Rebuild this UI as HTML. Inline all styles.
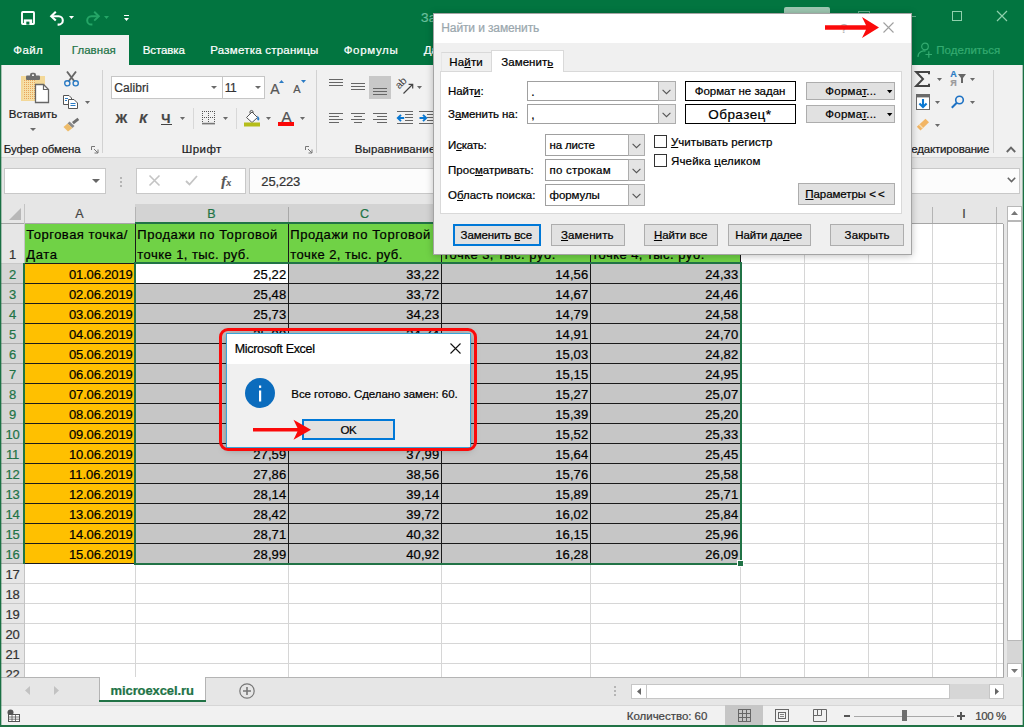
<!DOCTYPE html><html><head><meta charset="utf-8"><title>Excel</title><style>
*{box-sizing:border-box;margin:0;padding:0}
html,body{width:1024px;height:727px;overflow:hidden}
body{position:relative;font-family:"Liberation Sans",sans-serif;background:#e6e6e6;font-size:12px}
.t{position:absolute;white-space:nowrap;line-height:1;-webkit-text-stroke:0.22px}
.r{position:absolute}
svg{position:absolute;overflow:visible}
u{text-decoration:underline;text-underline-offset:1px}
</style></head><body>
<div class="r" style="left:0px;top:0px;width:1024px;height:65px;background:#027540;"></div>
<svg style="left:21px;top:11px;" width="14" height="14" viewBox="0 0 14 14"><rect x="1" y="1" width="12" height="12" rx="0.8" fill="none" stroke="#fff" stroke-width="1.9"/><rect x="2.8" y="8.4" width="8.4" height="4.8" fill="#fff"/><rect x="5.3" y="10.6" width="3.1" height="3" fill="#027540"/></svg>
<svg style="left:50px;top:10.5px;" width="15" height="14" viewBox="0 0 15 14"><path d="M2 5.2H8.6a4.2 4.2 0 0 1 0 8.4H7.6" fill="none" stroke="#fff" stroke-width="2.1"/><path d="M5.8 0.8L1.2 5.2L5.8 9.6" fill="none" stroke="#fff" stroke-width="2.1"/></svg>
<svg style="left:68.8px;top:16px;" width="5" height="3" viewBox="0 0 5 3"><path d="M0 0H5L2.5 3Z" fill="#fff"/></svg>
<svg style="left:84.5px;top:10.5px;" width="15" height="14" viewBox="0 0 15 14"><path d="M13 5.2H6.4a4.2 4.2 0 0 0 0 8.4H7.4" fill="none" stroke="#25a566" stroke-width="2"/><path d="M9.2 0.8L13.8 5.2L9.2 9.6" fill="none" stroke="#25a566" stroke-width="2"/></svg>
<svg style="left:103.8px;top:16px;" width="5" height="3" viewBox="0 0 5 3"><path d="M0 0H5L2.5 3Z" fill="#25a566"/></svg>
<div class="r" style="left:124px;top:15px;width:5px;height:1px;background:#fff;"></div>
<svg style="left:124.0px;top:18px;" width="5" height="3" viewBox="0 0 5 3"><path d="M0 0H5L2.5 3Z" fill="#fff"/></svg>
<div class="t" style="left:421.1px;top:12.4px;font-size:12.5px;color:#6cc09e;">За</div>
<div class="r" style="left:60px;top:35px;width:69px;height:30px;background:#f1f1f1;"></div>
<div class="t" style="left:13.3px;top:45.0px;font-size:11.5px;color:#fff;letter-spacing:0.41px;">Файл</div>
<div class="t" style="left:71.8px;top:45.0px;font-size:11.5px;color:#217346;letter-spacing:0.04px;">Главная</div>
<div class="t" style="left:142.8px;top:45.0px;font-size:11.5px;color:#fff;letter-spacing:-0.12px;">Вставка</div>
<div class="t" style="left:210.3px;top:45.0px;font-size:11.5px;color:#fff;letter-spacing:0.23px;">Разметка страницы</div>
<div class="t" style="left:343.7px;top:45.0px;font-size:11.5px;color:#fff;letter-spacing:0.66px;">Формулы</div>
<div class="t" style="left:423.8px;top:45.0px;font-size:11.5px;color:#fff;">Данные</div>
<div class="r" style="left:784px;top:7px;width:46px;height:12px;background:#9ec8b2;border-radius:2px"></div>
<div class="r" style="left:858px;top:11px;width:12px;height:10px;background:transparent;border:1px solid #5fae8a"></div>
<div class="r" style="left:906px;top:16px;width:10px;height:1px;background:#5fae8a;"></div>
<div class="r" style="left:952px;top:11px;width:10px;height:10px;background:transparent;border:1px solid #8fd0ac"></div>
<svg style="left:997px;top:11px;" width="10" height="10" viewBox="0 0 10 10"><path d="M0 0L10 10M10 0L0 10" stroke="#8fd0ac" stroke-width="1.2"/></svg>
<svg style="left:917px;top:42px;" width="16" height="16" viewBox="0 0 16 16"><circle cx="8" cy="4.5" r="3.3" fill="none" stroke="#34ab70" stroke-width="1.2"/><path d="M1 15C1 9.5 6 8.5 8.5 9.2" fill="none" stroke="#34ab70" stroke-width="1.2"/><path d="M8.5 12.5H15M11.8 9.2V15.8" stroke="#34ab70" stroke-width="1.2"/></svg>
<div class="t" style="left:936.3px;top:45.0px;font-size:11.5px;color:#34ab70;letter-spacing:0.05px;">Поделиться</div>
<div class="r" style="left:0px;top:65px;width:1024px;height:92px;background:#f1f1f1;"></div>
<div class="r" style="left:0px;top:157px;width:1024px;height:1px;background:#d8d8d8;"></div>
<svg style="left:20px;top:72px;" width="30" height="32" viewBox="0 0 30 32"><defs><pattern id="pd" width="2" height="2" patternUnits="userSpaceOnUse"><rect width="2" height="2" fill="#f6e0a8"/><rect width="1" height="1" fill="#e9a55c"/></pattern></defs><rect x="1" y="4" width="24" height="25" fill="#f3d898"/><rect x="3" y="8" width="12" height="20" fill="url(#pd)"/><rect x="6" y="3.5" width="14" height="4.5" rx="1" fill="#6e6e6e"/><rect x="10" y="0.8" width="6" height="5" rx="2" fill="#6e6e6e"/><rect x="12" y="2.4" width="2" height="1.6" fill="#f1f1f1"/><path d="M15.5 12.5H23.5L28.5 17.5V30.5H15.5Z" fill="#fff" stroke="#666" stroke-width="1.3"/><path d="M23.5 12.5V17.5H28.5" fill="none" stroke="#666" stroke-width="1.2"/></svg>
<div class="t" style="left:8.8px;top:109.0px;font-size:11.5px;color:#1c1c1c;letter-spacing:-0.04px;">Вставить</div>
<svg style="left:30.0px;top:128px;" width="6" height="3" viewBox="0 0 6 3"><path d="M0 0H6L3.0 3Z" fill="#6a6a6a"/></svg>
<svg style="left:64px;top:71px;" width="15" height="16" viewBox="0 0 15 16"><path d="M3 0.5L10.5 10.5M12 0.5L4.5 10.5" stroke="#666" stroke-width="1.9" fill="none"/><circle cx="3.3" cy="12.3" r="2.6" fill="none" stroke="#2b7bc4" stroke-width="1.4"/><circle cx="11.7" cy="12.3" r="2.6" fill="none" stroke="#2b7bc4" stroke-width="1.4"/></svg>
<svg style="left:63px;top:95px;" width="15" height="14" viewBox="0 0 15 14"><path d="M0.5 0.5H6L8.5 3V9.5H0.5Z" fill="#fff" stroke="#555"/><path d="M5.5 4.5H11L14.5 8V13.5H5.5Z" fill="#fff" stroke="#555"/><path d="M2 3.5H5M2 5.5H4M7.5 8.5H12.5M7.5 10.5H12.5" stroke="#2b7bc4" stroke-width="1"/></svg>
<svg style="left:85.0px;top:101px;" width="5" height="3" viewBox="0 0 5 3"><path d="M0 0H5L2.5 3Z" fill="#6a6a6a"/></svg>
<svg style="left:63px;top:117px;" width="17" height="15" viewBox="0 0 17 15"><path d="M9 5L14.5 0.8L16.2 3L10.8 7.2Z" fill="#6e6e6e"/><path d="M6.5 4.5L11.5 9L9.5 11L4.5 6.5Z" fill="#8a8a8a"/><path d="M4.5 6.5L9.5 11L5 14.5L0.5 10Z" fill="#eebc6a"/></svg>
<div class="t" style="left:3.8px;top:144.0px;font-size:11.5px;color:#1c1c1c;letter-spacing:-0.11px;">Буфер обмена</div>
<svg style="left:91px;top:146px;" width="8" height="8" viewBox="0 0 8 8"><path d="M0.5 4V0.5H4" fill="none" stroke="#777"/><path d="M3 3L7 7M7 3.5V7H3.5" fill="none" stroke="#777"/></svg>
<div class="r" style="left:102px;top:70px;width:1px;height:83px;background:#d2d2d2;"></div>
<div class="r" style="left:111px;top:76px;width:112px;height:23px;background:#fff;border:1px solid #c6c6c6"></div>
<div class="r" style="left:222px;top:76px;width:43px;height:23px;background:#fff;border:1px solid #c6c6c6"></div>
<div class="t" style="left:114.3px;top:82.2px;font-size:12px;color:#333;letter-spacing:0.08px;">Calibri</div>
<svg style="left:211.0px;top:86px;" width="6" height="3" viewBox="0 0 6 3"><path d="M0 0H6L3.0 3Z" fill="#6a6a6a"/></svg>
<div class="t" style="left:224.8px;top:82.2px;font-size:12px;color:#333;letter-spacing:-0.47px;">11</div>
<svg style="left:254.5px;top:86px;" width="6" height="3" viewBox="0 0 6 3"><path d="M0 0H6L3.0 3Z" fill="#6a6a6a"/></svg>
<div class="t" style="left:270.3px;top:81.6px;font-size:14px;color:#555;">A</div>
<svg style="left:279px;top:80px;" width="5" height="3" viewBox="0 0 5 3"><path d="M0 3H5L2.5 0Z" fill="#2b7bc4"/></svg>
<div class="t" style="left:293.3px;top:84.2px;font-size:11px;color:#555;">A</div>
<svg style="left:301px;top:80px;" width="5" height="3" viewBox="0 0 5 3"><path d="M0 0H5L2.5 3Z" fill="#2b7bc4"/></svg>
<div class="t" style="left:115.6px;top:112.1px;font-size:13px;color:#444;font-weight:bold">Ж</div>
<div class="t" style="left:139.3px;top:112.1px;font-size:13px;color:#444;font-weight:bold;font-style:italic">К</div>
<div class="t" style="left:161.3px;top:112.1px;font-size:13px;color:#444;font-weight:bold">Ч</div>
<div class="r" style="left:161px;top:124px;width:11px;height:1px;background:#444;"></div>
<svg style="left:180.0px;top:117px;" width="5" height="3" viewBox="0 0 5 3"><path d="M0 0H5L2.5 3Z" fill="#6a6a6a"/></svg>
<div class="r" style="left:193px;top:108px;width:1px;height:21px;background:#d8d8d8;"></div>
<svg style="left:202px;top:111px;" width="14" height="14" viewBox="0 0 14 14"><path d="M0 0.5H13M0 6.5H13M0.5 0V12M6.5 0V12M12.5 0V12" stroke="#555" stroke-dasharray="1 1" fill="none"/><path d="M0 12.6H13" stroke="#777" stroke-width="1.6"/></svg>
<svg style="left:223.0px;top:117px;" width="5" height="3" viewBox="0 0 5 3"><path d="M0 0H5L2.5 3Z" fill="#6a6a6a"/></svg>
<div class="r" style="left:236px;top:108px;width:1px;height:21px;background:#d8d8d8;"></div>
<svg style="left:244px;top:110px;" width="17" height="17" viewBox="0 0 17 17"><path d="M2.5 7.5L8 2L13.5 7.5L8 12.5Z" fill="#fff" stroke="#555"/><path d="M6 3.5V1.2Q7.5 -0.3 9 1.2V3" fill="none" stroke="#555"/><path d="M13.5 5.5Q16 8 15.2 10Q14 11 13.2 9.5Z" fill="#2b7bc4"/><rect x="0" y="12.5" width="16" height="4" fill="#b5bd1a"/></svg>
<svg style="left:266.0px;top:117px;" width="5" height="3" viewBox="0 0 5 3"><path d="M0 0H5L2.5 3Z" fill="#6a6a6a"/></svg>
<div class="t" style="left:281.6px;top:109.0px;font-size:15px;color:#505050;">A</div>
<div class="r" style="left:278px;top:122px;width:16px;height:4px;background:#fb0808;"></div>
<svg style="left:300.0px;top:117px;" width="5" height="3" viewBox="0 0 5 3"><path d="M0 0H5L2.5 3Z" fill="#6a6a6a"/></svg>
<div class="t" style="left:181.8px;top:144.0px;font-size:11.5px;color:#1c1c1c;letter-spacing:0.41px;">Шрифт</div>
<svg style="left:305px;top:146px;" width="8" height="8" viewBox="0 0 8 8"><path d="M0.5 4V0.5H4" fill="none" stroke="#777"/><path d="M3 3L7 7M7 3.5V7H3.5" fill="none" stroke="#777"/></svg>
<div class="r" style="left:316px;top:70px;width:1px;height:83px;background:#d2d2d2;"></div>
<svg style="left:329px;top:79px;" width="14" height="9" viewBox="0 0 14 9"><rect x="0" y="0" width="14" height="1" fill="#666"/><rect x="0" y="3" width="14" height="1" fill="#666"/><rect x="0" y="6" width="14" height="1" fill="#666"/></svg>
<svg style="left:351px;top:83px;" width="14" height="9" viewBox="0 0 14 9"><rect x="0" y="0" width="14" height="1" fill="#666"/><rect x="0" y="3" width="14" height="1" fill="#666"/><rect x="0" y="6" width="14" height="1" fill="#666"/></svg>
<div class="r" style="left:369px;top:76px;width:22px;height:23px;background:#c8c8c8;"></div>
<svg style="left:373px;top:88px;" width="14" height="9" viewBox="0 0 14 9"><rect x="0" y="0" width="14" height="1" fill="#666"/><rect x="0" y="3" width="14" height="1" fill="#666"/><rect x="0" y="6" width="14" height="1" fill="#666"/></svg>
<svg style="left:396px;top:77px;" width="18" height="18" viewBox="0 0 18 18"><text x="0" y="0" font-size="10.5" font-family="Liberation Sans" fill="#444" transform="translate(3.2 12.6) rotate(-45)">ab</text><path d="M7.5 16.5L16.5 7.5M12.6 7.3H16.7V11.4" fill="none" stroke="#444" stroke-width="1.2"/></svg>
<svg style="left:417.0px;top:86px;" width="5" height="3" viewBox="0 0 5 3"><path d="M0 0H5L2.5 3Z" fill="#6a6a6a"/></svg>
<svg style="left:329px;top:113px;" width="14" height="12" viewBox="0 0 14 12"><rect x="0" y="0" width="14" height="1" fill="#666"/><rect x="0" y="3" width="10" height="1" fill="#666"/><rect x="0" y="6" width="14" height="1" fill="#666"/><rect x="0" y="9" width="10" height="1" fill="#666"/></svg>
<svg style="left:351px;top:113px;" width="17" height="12" viewBox="0 0 17 12"><rect x="0" y="0" width="14" height="1" fill="#666"/><rect x="3" y="3" width="8" height="1" fill="#666"/><rect x="0" y="6" width="14" height="1" fill="#666"/><rect x="3" y="9" width="8" height="1" fill="#666"/></svg>
<svg style="left:373px;top:113px;" width="18" height="12" viewBox="0 0 18 12"><rect x="0" y="0" width="14" height="1" fill="#666"/><rect x="4" y="3" width="10" height="1" fill="#666"/><rect x="0" y="6" width="14" height="1" fill="#666"/><rect x="4" y="9" width="10" height="1" fill="#666"/></svg>
<svg style="left:397px;top:111px;" width="24" height="15" viewBox="0 0 24 15"><rect x="0" y="0" width="16" height="1" fill="#666"/><rect x="8" y="3" width="8" height="1" fill="#666"/><rect x="8" y="6" width="8" height="1" fill="#666"/><rect x="8" y="9" width="8" height="1" fill="#666"/><rect x="0" y="12" width="16" height="1" fill="#666"/></svg>
<svg style="left:397px;top:113.5px;" width="8" height="8" viewBox="0 0 8 8"><path d="M7.2 4H1M4 0.8L0.8 4L4 7.2" fill="none" stroke="#0a78d2" stroke-width="1.9"/></svg>
<svg style="left:419px;top:111px;" width="24" height="15" viewBox="0 0 24 15"><rect x="0" y="0" width="16" height="1" fill="#666"/><rect x="8" y="3" width="8" height="1" fill="#666"/><rect x="8" y="6" width="8" height="1" fill="#666"/><rect x="8" y="9" width="8" height="1" fill="#666"/><rect x="0" y="12" width="16" height="1" fill="#666"/></svg>
<svg style="left:419px;top:113.5px;" width="8" height="8" viewBox="0 0 8 8"><path d="M0.5 4H6.8M4 0.8L7.2 4L4 7.2" fill="none" stroke="#0a78d2" stroke-width="1.9"/></svg>
<div class="t" style="left:354.8px;top:144.0px;font-size:11.5px;color:#1c1c1c;letter-spacing:0.12px;">Выравнивание</div>
<svg style="left:915px;top:71px;" width="15" height="16" viewBox="0 0 15 16"><path d="M14 3.2V1H1.2L8 8L1.2 15H14V12.8" fill="none" stroke="#444" stroke-width="2" stroke-linejoin="miter"/></svg>
<svg style="left:937.0px;top:78px;" width="5" height="3" viewBox="0 0 5 3"><path d="M0 0H5L2.5 3Z" fill="#6a6a6a"/></svg>
<div class="t" style="left:950.3px;top:70.4px;font-size:9px;color:#2b7bc4;font-weight:bold">А</div>
<div class="t" style="left:950.3px;top:79.4px;font-size:9px;color:#9a9a9a;font-weight:bold">Я</div>
<svg style="left:958px;top:74px;" width="8" height="9" viewBox="0 0 8 9"><path d="M0 0H8L5 4V9H3V4Z" fill="#666"/></svg>
<svg style="left:970.0px;top:78px;" width="5" height="3" viewBox="0 0 5 3"><path d="M0 0H5L2.5 3Z" fill="#6a6a6a"/></svg>
<svg style="left:916px;top:94px;" width="14" height="16" viewBox="0 0 14 16"><rect x="0.5" y="0.5" width="13" height="15" fill="#fff" stroke="#6a6a6a"/><rect x="0" y="0" width="14" height="3.4" fill="#6a6a6a"/><path d="M7 5V13M3.4 9.4L7 13L10.6 9.4" fill="none" stroke="#0a78d2" stroke-width="2.1"/></svg>
<svg style="left:935.0px;top:101px;" width="5" height="3" viewBox="0 0 5 3"><path d="M0 0H5L2.5 3Z" fill="#6a6a6a"/></svg>
<svg style="left:951px;top:95px;" width="14" height="14" viewBox="0 0 14 14"><circle cx="8.5" cy="5" r="3.8" fill="none" stroke="#1e72c4" stroke-width="1.6"/><path d="M5.8 7.8L0.8 12.8" stroke="#1e72c4" stroke-width="2"/></svg>
<svg style="left:970.0px;top:101px;" width="5" height="3" viewBox="0 0 5 3"><path d="M0 0H5L2.5 3Z" fill="#6a6a6a"/></svg>
<svg style="left:916px;top:118px;" width="14" height="13" viewBox="0 0 14 13"><path d="M9.5 0.8L13 4.2L4.5 12.4L0.8 8.8Z" fill="#f2b564"/><path d="M3.2 6.6L6.8 10.2" stroke="#f8dcae" stroke-width="1.4"/></svg>
<svg style="left:935.0px;top:124px;" width="5" height="3" viewBox="0 0 5 3"><path d="M0 0H5L2.5 3Z" fill="#6a6a6a"/></svg>
<div class="t" style="left:904.3px;top:144.0px;font-size:11.5px;color:#1c1c1c;letter-spacing:-0.19px;">Редактирование</div>
<div class="r" style="left:993px;top:70px;width:1px;height:83px;background:#d2d2d2;"></div>
<svg style="left:1005.5px;top:146px;" width="10" height="7" viewBox="0 0 10 7"><path d="M0.8 6L5 1.6L9.2 6" fill="none" stroke="#666" stroke-width="1.9"/></svg>
<div class="r" style="left:0px;top:158px;width:1024px;height:46px;background:#e6e6e6;"></div>
<div class="r" style="left:4px;top:168px;width:102px;height:26px;background:#fff;border:1px solid #c8c8c8"></div>
<svg style="left:92px;top:179px;" width="8" height="4" viewBox="0 0 8 4"><path d="M0 0H8L4 4Z" fill="#666"/></svg>
<div class="r" style="left:120px;top:177px;width:2px;height:2px;background:#b5b5b5;"></div>
<div class="r" style="left:120px;top:181px;width:2px;height:2px;background:#b5b5b5;"></div>
<div class="r" style="left:120px;top:185px;width:2px;height:2px;background:#b5b5b5;"></div>
<div class="r" style="left:136px;top:168px;width:110px;height:26px;background:#fff;border:1px solid #c8c8c8"></div>
<svg style="left:149px;top:175px;" width="11" height="11" viewBox="0 0 11 11"><path d="M0.5 0.5L10.5 10.5M10.5 0.5L0.5 10.5" stroke="#c4c4c4" stroke-width="1.6"/></svg>
<svg style="left:185px;top:175px;" width="13" height="11" viewBox="0 0 13 11"><path d="M1 6L4.5 9.5L12 1" fill="none" stroke="#c4c4c4" stroke-width="1.8"/></svg>
<div class="t" style="left:221.3px;top:174.3px;font-size:14.5px;color:#555;font-weight:bold;font-family:'Liberation Serif',serif;"><i>f</i><i style="font-size:10px">x</i></div>
<div class="r" style="left:249px;top:168px;width:771px;height:26px;background:#fcfcfc;border:1px solid #c8c8c8"></div>
<div class="t" style="left:261.3px;top:175.1px;font-size:13px;color:#333;letter-spacing:-0.15px;">25,223</div>
<svg style="left:1007px;top:177px;" width="9" height="6" viewBox="0 0 9 6"><path d="M0.8 0.8L4.5 4.5L8.2 0.8" fill="none" stroke="#666" stroke-width="1.6"/></svg>
<div class="r" style="left:25px;top:224px;width:978px;height:453px;background:#fff;"></div>
<div class="r" style="left:1px;top:204px;width:1003px;height:19px;background:#e6e6e6;"></div>
<div class="r" style="left:135px;top:204px;width:605px;height:19px;background:#d3d3d3;"></div>
<div class="r" style="left:1px;top:223px;width:1003px;height:1px;background:#a6a6a6;"></div>
<svg style="left:9px;top:208px" width="12" height="12"><path d="M12 0V12H0Z" fill="#b8b8b8"/></svg>
<div class="r" style="left:24px;top:204px;width:1px;height:20px;background:#c4c4c4;"></div>
<div class="t" style="left:24.00px;width:111px;text-align:center;top:208.1px;font-size:12.5px;color:#444;">A</div>
<div class="r" style="left:135px;top:207px;width:1px;height:16px;background:#b4b4b4;"></div>
<div class="t" style="left:135.00px;width:153px;text-align:center;top:208.1px;font-size:12.5px;color:#217346;">B</div>
<div class="r" style="left:288px;top:207px;width:1px;height:16px;background:#a8a8a8;"></div>
<div class="t" style="left:288.00px;width:153px;text-align:center;top:208.1px;font-size:12.5px;color:#217346;">C</div>
<div class="r" style="left:441px;top:207px;width:1px;height:16px;background:#a8a8a8;"></div>
<div class="t" style="left:441.00px;width:149px;text-align:center;top:208.1px;font-size:12.5px;color:#217346;">D</div>
<div class="r" style="left:590px;top:207px;width:1px;height:16px;background:#a8a8a8;"></div>
<div class="t" style="left:590.00px;width:150px;text-align:center;top:208.1px;font-size:12.5px;color:#217346;">E</div>
<div class="r" style="left:740px;top:207px;width:1px;height:16px;background:#a8a8a8;"></div>
<div class="t" style="left:740.00px;width:64px;text-align:center;top:208.1px;font-size:12.5px;color:#444;">F</div>
<div class="r" style="left:804px;top:207px;width:1px;height:16px;background:#b4b4b4;"></div>
<div class="t" style="left:804.00px;width:64px;text-align:center;top:208.1px;font-size:12.5px;color:#444;">G</div>
<div class="r" style="left:868px;top:207px;width:1px;height:16px;background:#b4b4b4;"></div>
<div class="t" style="left:868.00px;width:64px;text-align:center;top:208.1px;font-size:12.5px;color:#444;">H</div>
<div class="r" style="left:932px;top:207px;width:1px;height:16px;background:#b4b4b4;"></div>
<div class="t" style="left:932.00px;width:64px;text-align:center;top:208.1px;font-size:12.5px;color:#444;">I</div>
<div class="r" style="left:996px;top:207px;width:1px;height:16px;background:#b4b4b4;"></div>
<div class="r" style="left:135px;top:222px;width:606px;height:2px;background:#217346;"></div>
<div class="r" style="left:1px;top:224px;width:23px;height:39px;background:#e6e6e6;"></div>
<div class="r" style="left:1px;top:263px;width:24px;height:1px;background:#c8c8c8;"></div>
<div class="t" style="left:1.00px;width:23px;text-align:center;top:247.5px;font-size:13px;color:#333;letter-spacing:-0.3px;">1</div>
<div class="r" style="left:1px;top:264px;width:23px;height:19px;background:#d5d5d5;"></div>
<div class="r" style="left:1px;top:283px;width:24px;height:1px;background:#ababab;"></div>
<div class="t" style="left:1.00px;width:23px;text-align:center;top:267.5px;font-size:13px;color:#217346;letter-spacing:-0.3px;">2</div>
<div class="r" style="left:1px;top:284px;width:23px;height:19px;background:#d5d5d5;"></div>
<div class="r" style="left:1px;top:303px;width:24px;height:1px;background:#ababab;"></div>
<div class="t" style="left:1.00px;width:23px;text-align:center;top:287.5px;font-size:13px;color:#217346;letter-spacing:-0.3px;">3</div>
<div class="r" style="left:1px;top:304px;width:23px;height:19px;background:#d5d5d5;"></div>
<div class="r" style="left:1px;top:323px;width:24px;height:1px;background:#ababab;"></div>
<div class="t" style="left:1.00px;width:23px;text-align:center;top:307.5px;font-size:13px;color:#217346;letter-spacing:-0.3px;">4</div>
<div class="r" style="left:1px;top:324px;width:23px;height:19px;background:#d5d5d5;"></div>
<div class="r" style="left:1px;top:343px;width:24px;height:1px;background:#ababab;"></div>
<div class="t" style="left:1.00px;width:23px;text-align:center;top:327.5px;font-size:13px;color:#217346;letter-spacing:-0.3px;">5</div>
<div class="r" style="left:1px;top:344px;width:23px;height:19px;background:#d5d5d5;"></div>
<div class="r" style="left:1px;top:363px;width:24px;height:1px;background:#ababab;"></div>
<div class="t" style="left:1.00px;width:23px;text-align:center;top:347.5px;font-size:13px;color:#217346;letter-spacing:-0.3px;">6</div>
<div class="r" style="left:1px;top:364px;width:23px;height:19px;background:#d5d5d5;"></div>
<div class="r" style="left:1px;top:383px;width:24px;height:1px;background:#ababab;"></div>
<div class="t" style="left:1.00px;width:23px;text-align:center;top:367.5px;font-size:13px;color:#217346;letter-spacing:-0.3px;">7</div>
<div class="r" style="left:1px;top:384px;width:23px;height:19px;background:#d5d5d5;"></div>
<div class="r" style="left:1px;top:403px;width:24px;height:1px;background:#ababab;"></div>
<div class="t" style="left:1.00px;width:23px;text-align:center;top:387.5px;font-size:13px;color:#217346;letter-spacing:-0.3px;">8</div>
<div class="r" style="left:1px;top:404px;width:23px;height:19px;background:#d5d5d5;"></div>
<div class="r" style="left:1px;top:423px;width:24px;height:1px;background:#ababab;"></div>
<div class="t" style="left:1.00px;width:23px;text-align:center;top:407.5px;font-size:13px;color:#217346;letter-spacing:-0.3px;">9</div>
<div class="r" style="left:1px;top:424px;width:23px;height:19px;background:#d5d5d5;"></div>
<div class="r" style="left:1px;top:443px;width:24px;height:1px;background:#ababab;"></div>
<div class="t" style="left:1.00px;width:23px;text-align:center;top:427.5px;font-size:13px;color:#217346;letter-spacing:-0.3px;">10</div>
<div class="r" style="left:1px;top:444px;width:23px;height:19px;background:#d5d5d5;"></div>
<div class="r" style="left:1px;top:463px;width:24px;height:1px;background:#ababab;"></div>
<div class="t" style="left:1.00px;width:23px;text-align:center;top:447.5px;font-size:13px;color:#217346;letter-spacing:-0.3px;">11</div>
<div class="r" style="left:1px;top:464px;width:23px;height:19px;background:#d5d5d5;"></div>
<div class="r" style="left:1px;top:483px;width:24px;height:1px;background:#ababab;"></div>
<div class="t" style="left:1.00px;width:23px;text-align:center;top:467.5px;font-size:13px;color:#217346;letter-spacing:-0.3px;">12</div>
<div class="r" style="left:1px;top:484px;width:23px;height:19px;background:#d5d5d5;"></div>
<div class="r" style="left:1px;top:503px;width:24px;height:1px;background:#ababab;"></div>
<div class="t" style="left:1.00px;width:23px;text-align:center;top:487.5px;font-size:13px;color:#217346;letter-spacing:-0.3px;">13</div>
<div class="r" style="left:1px;top:504px;width:23px;height:19px;background:#d5d5d5;"></div>
<div class="r" style="left:1px;top:523px;width:24px;height:1px;background:#ababab;"></div>
<div class="t" style="left:1.00px;width:23px;text-align:center;top:507.5px;font-size:13px;color:#217346;letter-spacing:-0.3px;">14</div>
<div class="r" style="left:1px;top:524px;width:23px;height:19px;background:#d5d5d5;"></div>
<div class="r" style="left:1px;top:543px;width:24px;height:1px;background:#ababab;"></div>
<div class="t" style="left:1.00px;width:23px;text-align:center;top:527.5px;font-size:13px;color:#217346;letter-spacing:-0.3px;">15</div>
<div class="r" style="left:1px;top:544px;width:23px;height:19px;background:#d5d5d5;"></div>
<div class="r" style="left:1px;top:563px;width:24px;height:1px;background:#ababab;"></div>
<div class="t" style="left:1.00px;width:23px;text-align:center;top:547.5px;font-size:13px;color:#217346;letter-spacing:-0.3px;">16</div>
<div class="r" style="left:1px;top:564px;width:23px;height:19px;background:#e6e6e6;"></div>
<div class="r" style="left:1px;top:583px;width:24px;height:1px;background:#c8c8c8;"></div>
<div class="t" style="left:1.00px;width:23px;text-align:center;top:567.5px;font-size:13px;color:#333;letter-spacing:-0.3px;">17</div>
<div class="r" style="left:1px;top:584px;width:23px;height:19px;background:#e6e6e6;"></div>
<div class="r" style="left:1px;top:603px;width:24px;height:1px;background:#c8c8c8;"></div>
<div class="t" style="left:1.00px;width:23px;text-align:center;top:587.5px;font-size:13px;color:#333;letter-spacing:-0.3px;">18</div>
<div class="r" style="left:1px;top:604px;width:23px;height:19px;background:#e6e6e6;"></div>
<div class="r" style="left:1px;top:623px;width:24px;height:1px;background:#c8c8c8;"></div>
<div class="t" style="left:1.00px;width:23px;text-align:center;top:607.5px;font-size:13px;color:#333;letter-spacing:-0.3px;">19</div>
<div class="r" style="left:1px;top:624px;width:23px;height:19px;background:#e6e6e6;"></div>
<div class="r" style="left:1px;top:643px;width:24px;height:1px;background:#c8c8c8;"></div>
<div class="t" style="left:1.00px;width:23px;text-align:center;top:627.5px;font-size:13px;color:#333;letter-spacing:-0.3px;">20</div>
<div class="r" style="left:1px;top:644px;width:23px;height:19px;background:#e6e6e6;"></div>
<div class="r" style="left:1px;top:663px;width:24px;height:1px;background:#c8c8c8;"></div>
<div class="t" style="left:1.00px;width:23px;text-align:center;top:647.5px;font-size:13px;color:#333;letter-spacing:-0.3px;">21</div>
<div class="r" style="left:1px;top:664px;width:23px;height:19px;background:#e6e6e6;"></div>
<div class="r" style="left:1px;top:683px;width:24px;height:1px;background:#c8c8c8;"></div>
<div class="t" style="left:1.00px;width:23px;text-align:center;top:667.5px;font-size:13px;color:#333;letter-spacing:-0.3px;">22</div>
<div class="r" style="left:24px;top:224px;width:1px;height:453px;background:#c4c4c4;"></div>
<div class="r" style="left:135px;top:224px;width:1px;height:453px;background:#d6d6d6;"></div>
<div class="r" style="left:288px;top:224px;width:1px;height:453px;background:#d6d6d6;"></div>
<div class="r" style="left:441px;top:224px;width:1px;height:453px;background:#d6d6d6;"></div>
<div class="r" style="left:590px;top:224px;width:1px;height:453px;background:#d6d6d6;"></div>
<div class="r" style="left:740px;top:224px;width:1px;height:453px;background:#d6d6d6;"></div>
<div class="r" style="left:804px;top:224px;width:1px;height:453px;background:#d6d6d6;"></div>
<div class="r" style="left:868px;top:224px;width:1px;height:453px;background:#d6d6d6;"></div>
<div class="r" style="left:932px;top:224px;width:1px;height:453px;background:#d6d6d6;"></div>
<div class="r" style="left:996px;top:224px;width:1px;height:453px;background:#d6d6d6;"></div>
<div class="r" style="left:25px;top:263px;width:978px;height:1px;background:#d6d6d6;"></div>
<div class="r" style="left:25px;top:283px;width:978px;height:1px;background:#d6d6d6;"></div>
<div class="r" style="left:25px;top:303px;width:978px;height:1px;background:#d6d6d6;"></div>
<div class="r" style="left:25px;top:323px;width:978px;height:1px;background:#d6d6d6;"></div>
<div class="r" style="left:25px;top:343px;width:978px;height:1px;background:#d6d6d6;"></div>
<div class="r" style="left:25px;top:363px;width:978px;height:1px;background:#d6d6d6;"></div>
<div class="r" style="left:25px;top:383px;width:978px;height:1px;background:#d6d6d6;"></div>
<div class="r" style="left:25px;top:403px;width:978px;height:1px;background:#d6d6d6;"></div>
<div class="r" style="left:25px;top:423px;width:978px;height:1px;background:#d6d6d6;"></div>
<div class="r" style="left:25px;top:443px;width:978px;height:1px;background:#d6d6d6;"></div>
<div class="r" style="left:25px;top:463px;width:978px;height:1px;background:#d6d6d6;"></div>
<div class="r" style="left:25px;top:483px;width:978px;height:1px;background:#d6d6d6;"></div>
<div class="r" style="left:25px;top:503px;width:978px;height:1px;background:#d6d6d6;"></div>
<div class="r" style="left:25px;top:523px;width:978px;height:1px;background:#d6d6d6;"></div>
<div class="r" style="left:25px;top:543px;width:978px;height:1px;background:#d6d6d6;"></div>
<div class="r" style="left:25px;top:563px;width:978px;height:1px;background:#d6d6d6;"></div>
<div class="r" style="left:25px;top:583px;width:978px;height:1px;background:#d6d6d6;"></div>
<div class="r" style="left:25px;top:603px;width:978px;height:1px;background:#d6d6d6;"></div>
<div class="r" style="left:25px;top:623px;width:978px;height:1px;background:#d6d6d6;"></div>
<div class="r" style="left:25px;top:643px;width:978px;height:1px;background:#d6d6d6;"></div>
<div class="r" style="left:25px;top:663px;width:978px;height:1px;background:#d6d6d6;"></div>
<div class="r" style="left:25px;top:224px;width:110px;height:39px;background:#70d246;"></div>
<div class="r" style="left:135px;top:224px;width:605px;height:39px;background:#70d246;"></div>
<div class="t" style="left:26.3px;top:227.7px;font-size:13px;color:#000;letter-spacing:0.50px;">Торговая точка/</div>
<div class="t" style="left:26.3px;top:248.1px;font-size:13px;color:#000;letter-spacing:0.65px;">Дата</div>
<div class="t" style="left:137.3px;top:227.7px;font-size:13px;color:#000;letter-spacing:0.55px;">Продажи по Торговой</div>
<div class="t" style="left:137.3px;top:248.1px;font-size:13px;color:#000;letter-spacing:0.44px;">точке 1, тыс. руб.</div>
<div class="t" style="left:290.3px;top:227.7px;font-size:13px;color:#000;letter-spacing:0.55px;">Продажи по Торговой</div>
<div class="t" style="left:290.3px;top:248.1px;font-size:13px;color:#000;letter-spacing:0.44px;">точке 2, тыс. руб.</div>
<div class="t" style="left:443.3px;top:227.7px;font-size:13px;color:#000;letter-spacing:0.55px;">Продажи по Торговой</div>
<div class="t" style="left:443.3px;top:248.1px;font-size:13px;color:#000;letter-spacing:0.44px;">точке 3, тыс. руб.</div>
<div class="t" style="left:592.3px;top:227.7px;font-size:13px;color:#000;letter-spacing:0.55px;">Продажи по Торговой</div>
<div class="t" style="left:592.3px;top:248.1px;font-size:13px;color:#000;letter-spacing:0.44px;">точке 4, тыс. руб.</div>
<div class="r" style="left:25px;top:263px;width:110px;height:300px;background:#ffc000;"></div>
<div class="r" style="left:135px;top:263px;width:605px;height:300px;background:#c6c6c6;"></div>
<div class="r" style="left:136px;top:264px;width:152px;height:19px;background:#fff;"></div>
<div class="t" style="right:891.45px;top:267.7px;font-size:13px;color:#000;letter-spacing:-0.15px;">01.06.2019</div>
<div class="t" style="right:737.69px;top:267.7px;font-size:13px;color:#000;letter-spacing:0.11px;">25,22</div>
<div class="t" style="right:584.69px;top:267.7px;font-size:13px;color:#000;letter-spacing:0.11px;">33,22</div>
<div class="t" style="right:435.69px;top:267.7px;font-size:13px;color:#000;letter-spacing:0.11px;">14,56</div>
<div class="t" style="right:285.69px;top:267.7px;font-size:13px;color:#000;letter-spacing:0.11px;">24,33</div>
<div class="t" style="right:891.45px;top:287.7px;font-size:13px;color:#000;letter-spacing:-0.15px;">02.06.2019</div>
<div class="t" style="right:737.69px;top:287.7px;font-size:13px;color:#000;letter-spacing:0.11px;">25,48</div>
<div class="t" style="right:584.69px;top:287.7px;font-size:13px;color:#000;letter-spacing:0.11px;">33,72</div>
<div class="t" style="right:435.69px;top:287.7px;font-size:13px;color:#000;letter-spacing:0.11px;">14,67</div>
<div class="t" style="right:285.69px;top:287.7px;font-size:13px;color:#000;letter-spacing:0.11px;">24,46</div>
<div class="t" style="right:891.45px;top:307.7px;font-size:13px;color:#000;letter-spacing:-0.15px;">03.06.2019</div>
<div class="t" style="right:737.69px;top:307.7px;font-size:13px;color:#000;letter-spacing:0.11px;">25,73</div>
<div class="t" style="right:584.69px;top:307.7px;font-size:13px;color:#000;letter-spacing:0.11px;">34,23</div>
<div class="t" style="right:435.69px;top:307.7px;font-size:13px;color:#000;letter-spacing:0.11px;">14,79</div>
<div class="t" style="right:285.69px;top:307.7px;font-size:13px;color:#000;letter-spacing:0.11px;">24,58</div>
<div class="t" style="right:891.45px;top:327.7px;font-size:13px;color:#000;letter-spacing:-0.15px;">04.06.2019</div>
<div class="t" style="right:737.69px;top:327.7px;font-size:13px;color:#000;letter-spacing:0.11px;">25,99</div>
<div class="t" style="right:584.69px;top:327.7px;font-size:13px;color:#000;letter-spacing:0.11px;">34,74</div>
<div class="t" style="right:435.69px;top:327.7px;font-size:13px;color:#000;letter-spacing:0.11px;">14,91</div>
<div class="t" style="right:285.69px;top:327.7px;font-size:13px;color:#000;letter-spacing:0.11px;">24,70</div>
<div class="t" style="right:891.45px;top:347.7px;font-size:13px;color:#000;letter-spacing:-0.15px;">05.06.2019</div>
<div class="t" style="right:737.69px;top:347.7px;font-size:13px;color:#000;letter-spacing:0.11px;">26,25</div>
<div class="t" style="right:584.69px;top:347.7px;font-size:13px;color:#000;letter-spacing:0.11px;">35,26</div>
<div class="t" style="right:435.69px;top:347.7px;font-size:13px;color:#000;letter-spacing:0.11px;">15,03</div>
<div class="t" style="right:285.69px;top:347.7px;font-size:13px;color:#000;letter-spacing:0.11px;">24,82</div>
<div class="t" style="right:891.45px;top:367.7px;font-size:13px;color:#000;letter-spacing:-0.15px;">06.06.2019</div>
<div class="t" style="right:737.69px;top:367.7px;font-size:13px;color:#000;letter-spacing:0.11px;">26,51</div>
<div class="t" style="right:584.69px;top:367.7px;font-size:13px;color:#000;letter-spacing:0.11px;">35,79</div>
<div class="t" style="right:435.69px;top:367.7px;font-size:13px;color:#000;letter-spacing:0.11px;">15,15</div>
<div class="t" style="right:285.69px;top:367.7px;font-size:13px;color:#000;letter-spacing:0.11px;">24,95</div>
<div class="t" style="right:891.45px;top:387.7px;font-size:13px;color:#000;letter-spacing:-0.15px;">07.06.2019</div>
<div class="t" style="right:737.69px;top:387.7px;font-size:13px;color:#000;letter-spacing:0.11px;">26,78</div>
<div class="t" style="right:584.69px;top:387.7px;font-size:13px;color:#000;letter-spacing:0.11px;">36,33</div>
<div class="t" style="right:435.69px;top:387.7px;font-size:13px;color:#000;letter-spacing:0.11px;">15,27</div>
<div class="t" style="right:285.69px;top:387.7px;font-size:13px;color:#000;letter-spacing:0.11px;">25,07</div>
<div class="t" style="right:891.45px;top:407.7px;font-size:13px;color:#000;letter-spacing:-0.15px;">08.06.2019</div>
<div class="t" style="right:737.69px;top:407.7px;font-size:13px;color:#000;letter-spacing:0.11px;">27,05</div>
<div class="t" style="right:584.69px;top:407.7px;font-size:13px;color:#000;letter-spacing:0.11px;">36,87</div>
<div class="t" style="right:435.69px;top:407.7px;font-size:13px;color:#000;letter-spacing:0.11px;">15,39</div>
<div class="t" style="right:285.69px;top:407.7px;font-size:13px;color:#000;letter-spacing:0.11px;">25,20</div>
<div class="t" style="right:891.45px;top:427.7px;font-size:13px;color:#000;letter-spacing:-0.15px;">09.06.2019</div>
<div class="t" style="right:737.69px;top:427.7px;font-size:13px;color:#000;letter-spacing:0.11px;">27,32</div>
<div class="t" style="right:584.69px;top:427.7px;font-size:13px;color:#000;letter-spacing:0.11px;">37,43</div>
<div class="t" style="right:435.69px;top:427.7px;font-size:13px;color:#000;letter-spacing:0.11px;">15,52</div>
<div class="t" style="right:285.69px;top:427.7px;font-size:13px;color:#000;letter-spacing:0.11px;">25,33</div>
<div class="t" style="right:891.45px;top:447.7px;font-size:13px;color:#000;letter-spacing:-0.15px;">10.06.2019</div>
<div class="t" style="right:737.69px;top:447.7px;font-size:13px;color:#000;letter-spacing:0.11px;">27,59</div>
<div class="t" style="right:584.69px;top:447.7px;font-size:13px;color:#000;letter-spacing:0.11px;">37,99</div>
<div class="t" style="right:435.69px;top:447.7px;font-size:13px;color:#000;letter-spacing:0.11px;">15,64</div>
<div class="t" style="right:285.69px;top:447.7px;font-size:13px;color:#000;letter-spacing:0.11px;">25,45</div>
<div class="t" style="right:891.34px;top:467.7px;font-size:13px;color:#000;letter-spacing:-0.04px;">11.06.2019</div>
<div class="t" style="right:737.69px;top:467.7px;font-size:13px;color:#000;letter-spacing:0.11px;">27,86</div>
<div class="t" style="right:584.69px;top:467.7px;font-size:13px;color:#000;letter-spacing:0.11px;">38,56</div>
<div class="t" style="right:435.69px;top:467.7px;font-size:13px;color:#000;letter-spacing:0.11px;">15,76</div>
<div class="t" style="right:285.69px;top:467.7px;font-size:13px;color:#000;letter-spacing:0.11px;">25,58</div>
<div class="t" style="right:891.45px;top:487.7px;font-size:13px;color:#000;letter-spacing:-0.15px;">12.06.2019</div>
<div class="t" style="right:737.69px;top:487.7px;font-size:13px;color:#000;letter-spacing:0.11px;">28,14</div>
<div class="t" style="right:584.69px;top:487.7px;font-size:13px;color:#000;letter-spacing:0.11px;">39,14</div>
<div class="t" style="right:435.69px;top:487.7px;font-size:13px;color:#000;letter-spacing:0.11px;">15,89</div>
<div class="t" style="right:285.69px;top:487.7px;font-size:13px;color:#000;letter-spacing:0.11px;">25,71</div>
<div class="t" style="right:891.45px;top:507.7px;font-size:13px;color:#000;letter-spacing:-0.15px;">13.06.2019</div>
<div class="t" style="right:737.69px;top:507.7px;font-size:13px;color:#000;letter-spacing:0.11px;">28,42</div>
<div class="t" style="right:584.69px;top:507.7px;font-size:13px;color:#000;letter-spacing:0.11px;">39,72</div>
<div class="t" style="right:435.69px;top:507.7px;font-size:13px;color:#000;letter-spacing:0.11px;">16,02</div>
<div class="t" style="right:285.69px;top:507.7px;font-size:13px;color:#000;letter-spacing:0.11px;">25,84</div>
<div class="t" style="right:891.45px;top:527.7px;font-size:13px;color:#000;letter-spacing:-0.15px;">14.06.2019</div>
<div class="t" style="right:737.69px;top:527.7px;font-size:13px;color:#000;letter-spacing:0.11px;">28,71</div>
<div class="t" style="right:584.69px;top:527.7px;font-size:13px;color:#000;letter-spacing:0.11px;">40,32</div>
<div class="t" style="right:435.69px;top:527.7px;font-size:13px;color:#000;letter-spacing:0.11px;">16,15</div>
<div class="t" style="right:285.69px;top:527.7px;font-size:13px;color:#000;letter-spacing:0.11px;">25,96</div>
<div class="t" style="right:891.45px;top:547.7px;font-size:13px;color:#000;letter-spacing:-0.15px;">15.06.2019</div>
<div class="t" style="right:737.69px;top:547.7px;font-size:13px;color:#000;letter-spacing:0.11px;">28,99</div>
<div class="t" style="right:584.69px;top:547.7px;font-size:13px;color:#000;letter-spacing:0.11px;">40,92</div>
<div class="t" style="right:435.69px;top:547.7px;font-size:13px;color:#000;letter-spacing:0.11px;">16,28</div>
<div class="t" style="right:285.69px;top:547.7px;font-size:13px;color:#000;letter-spacing:0.11px;">26,09</div>
<div class="r" style="left:25px;top:263px;width:715px;height:1px;background:#1a1a1a;"></div>
<div class="r" style="left:25px;top:283px;width:715px;height:1px;background:#1a1a1a;"></div>
<div class="r" style="left:25px;top:303px;width:715px;height:1px;background:#1a1a1a;"></div>
<div class="r" style="left:25px;top:323px;width:715px;height:1px;background:#1a1a1a;"></div>
<div class="r" style="left:25px;top:343px;width:715px;height:1px;background:#1a1a1a;"></div>
<div class="r" style="left:25px;top:363px;width:715px;height:1px;background:#1a1a1a;"></div>
<div class="r" style="left:25px;top:383px;width:715px;height:1px;background:#1a1a1a;"></div>
<div class="r" style="left:25px;top:403px;width:715px;height:1px;background:#1a1a1a;"></div>
<div class="r" style="left:25px;top:423px;width:715px;height:1px;background:#1a1a1a;"></div>
<div class="r" style="left:25px;top:443px;width:715px;height:1px;background:#1a1a1a;"></div>
<div class="r" style="left:25px;top:463px;width:715px;height:1px;background:#1a1a1a;"></div>
<div class="r" style="left:25px;top:483px;width:715px;height:1px;background:#1a1a1a;"></div>
<div class="r" style="left:25px;top:503px;width:715px;height:1px;background:#1a1a1a;"></div>
<div class="r" style="left:25px;top:523px;width:715px;height:1px;background:#1a1a1a;"></div>
<div class="r" style="left:25px;top:543px;width:715px;height:1px;background:#1a1a1a;"></div>
<div class="r" style="left:25px;top:563px;width:715px;height:1px;background:#1a1a1a;"></div>
<div class="r" style="left:288px;top:224px;width:1px;height:340px;background:#1a1a1a;"></div>
<div class="r" style="left:441px;top:224px;width:1px;height:340px;background:#1a1a1a;"></div>
<div class="r" style="left:590px;top:224px;width:1px;height:340px;background:#1a1a1a;"></div>
<div class="r" style="left:23px;top:263px;width:2px;height:301px;background:#217346;"></div>
<div class="r" style="left:134px;top:262px;width:2px;height:303px;background:#217346;"></div>
<div class="r" style="left:135px;top:224px;width:1px;height:38px;background:#1a1a1a;"></div>
<div class="r" style="left:740px;top:224px;width:1px;height:38px;background:#1a1a1a;"></div>
<div class="r" style="left:134px;top:262px;width:608px;height:2px;background:#217346;"></div>
<div class="r" style="left:740px;top:262px;width:2px;height:299px;background:#217346;"></div>
<div class="r" style="left:134px;top:563px;width:604px;height:2px;background:#217346;"></div>
<div class="r" style="left:737px;top:560px;width:7px;height:7px;background:#fff;"></div>
<div class="r" style="left:738px;top:561px;width:5px;height:5px;background:#217346;"></div>
<div class="r" style="left:1003px;top:204px;width:21px;height:473px;background:#e6e6e6;"></div>
<div class="r" style="left:1003px;top:224px;width:1px;height:453px;background:#a6a6a6;"></div>
<div class="r" style="left:1007px;top:206px;width:15px;height:15px;background:#fff;border:1px solid #b8b8b8"></div>
<svg style="left:1011px;top:211px" width="7" height="4"><path d="M0 4H7L3.5 0Z" fill="#777"/></svg>
<div class="r" style="left:1007px;top:221px;width:15px;height:420px;background:#fff;border:1px solid #b8b8b8"></div>
<div class="r" style="left:1007px;top:641px;width:15px;height:22px;background:#d6d6d6;"></div>
<div class="r" style="left:1007px;top:663px;width:15px;height:15px;background:#fff;border:1px solid #b8b8b8"></div>
<svg style="left:1011px;top:669px" width="7" height="4"><path d="M0 0H7L3.5 4Z" fill="#777"/></svg>
<div class="r" style="left:0px;top:677px;width:1024px;height:28px;background:#e6e6e6;"></div>
<div class="r" style="left:0px;top:677px;width:1004px;height:1px;background:#b4b4b4;"></div>
<svg style="left:25px;top:686px" width="5" height="9"><path d="M5 0V9L0 4.5Z" fill="#c2c2c2"/></svg>
<svg style="left:54px;top:686px" width="5" height="9"><path d="M0 0V9L5 4.5Z" fill="#c2c2c2"/></svg>
<div class="r" style="left:99px;top:677px;width:107px;height:25px;background:#fff;border-left:1px solid #b4b4b4;border-right:1px solid #b4b4b4"></div>
<div class="r" style="left:99px;top:700px;width:107px;height:2px;background:#217346;"></div>
<div class="t" style="left:110.5px;top:684.1px;font-size:13px;color:#217346;letter-spacing:-0.09px;font-weight:bold;">microexcel.ru</div>
<svg style="left:239px;top:683px" width="16" height="16"><circle cx="8" cy="8" r="7.2" fill="none" stroke="#777" stroke-width="1.2"/><path d="M4 8H12M8 4V12" stroke="#777" stroke-width="1.6"/></svg>
<div class="r" style="left:614px;top:686px;width:2px;height:2px;background:#b5b5b5;"></div>
<div class="r" style="left:614px;top:690px;width:2px;height:2px;background:#b5b5b5;"></div>
<div class="r" style="left:614px;top:694px;width:2px;height:2px;background:#b5b5b5;"></div>
<div class="r" style="left:631px;top:684px;width:16px;height:15px;background:#fff;border:1px solid #c6c6c6"></div>
<svg style="left:637px;top:688px" width="4" height="7"><path d="M4 0V7L0 3.5Z" fill="#666"/></svg>
<div class="r" style="left:646px;top:684px;width:304px;height:15px;background:#fff;border:1px solid #c6c6c6"></div>
<div class="r" style="left:950px;top:684px;width:39px;height:15px;background:#d6d6d6;"></div>
<div class="r" style="left:989px;top:684px;width:15px;height:15px;background:#fff;border:1px solid #c6c6c6"></div>
<svg style="left:995px;top:688px" width="4" height="7"><path d="M0 0V7L4 3.5Z" fill="#666"/></svg>
<div class="r" style="left:0px;top:706px;width:1024px;height:19px;background:#f1f1f1;"></div>
<div class="r" style="left:0px;top:705px;width:1024px;height:1px;background:#d6d6d6;"></div>
<svg style="left:7px;top:709px" width="14" height="13"><circle cx="3.5" cy="3.5" r="3" fill="#555"/><rect x="1.5" y="5.5" width="11" height="7" fill="#fff" stroke="#555"/><path d="M1.5 8H12.5M1.5 10.2H12.5M5 5.5V12.5M8.5 5.5V12.5" stroke="#555" stroke-width="0.8"/></svg>
<div class="t" style="left:626.8px;top:710.5px;font-size:11.5px;color:#444;letter-spacing:-0.03px;">Количество: 60</div>
<div class="r" style="left:725px;top:705px;width:38px;height:20px;background:#c6c6c6;"></div>
<svg style="left:738px;top:709px" width="13" height="13"><rect x="0.5" y="0.5" width="12" height="12" fill="none" stroke="#666"/><path d="M4.5 0V13M8.5 0V13M0 4.5H13M0 8.5H13" stroke="#666"/></svg>
<svg style="left:775px;top:709px" width="14" height="13"><rect x="0.5" y="0.5" width="13" height="12" fill="none" stroke="#666"/><rect x="3.5" y="3.5" width="7" height="6" fill="none" stroke="#666"/><path d="M5 5.5H9M5 7.5H9" stroke="#666" stroke-width="0.8"/></svg>
<svg style="left:813px;top:709px" width="14" height="13"><path d="M0.5 0.5H13.5V12.5H0.5Z" fill="none" stroke="#666"/><path d="M4.5 0.5V6.5H0.5M8.5 0.5V6.5H4.5" fill="none" stroke="#666"/></svg>
<div class="r" style="left:844px;top:715px;width:6px;height:2px;background:#555;"></div>
<div class="r" style="left:854px;top:716px;width:100px;height:1px;background:#a8a8a8;"></div>
<div class="r" style="left:902px;top:710px;width:5px;height:11px;background:#6e6e6e;"></div>
<div class="r" style="left:957px;top:715px;width:8px;height:2px;background:#555;"></div>
<div class="r" style="left:960px;top:712px;width:2px;height:8px;background:#555;"></div>
<div class="t" style="left:975.3px;top:710.5px;font-size:11.5px;color:#444;letter-spacing:-0.40px;">100 %</div>
<div class="r" style="left:0px;top:65px;width:1px;height:662px;background:#1a7044;"></div>
<div class="r" style="left:1px;top:65px;width:1px;height:662px;background:rgba(33,115,70,0.35);"></div>
<div class="r" style="left:1023px;top:65px;width:1px;height:662px;background:#1a7044;"></div>
<div class="r" style="left:1022px;top:65px;width:1px;height:662px;background:rgba(33,115,70,0.35);"></div>
<div class="r" style="left:0px;top:725px;width:1024px;height:2px;background:#217346;"></div>
<div class="r" style="left:433px;top:13px;width:479px;height:242px;background:#f0f0f0;box-shadow:0 1px 7px 0 rgba(0,0,0,0.25);border:1px solid #a4a4a4"></div>
<div class="r" style="left:434px;top:14px;width:477px;height:29px;background:#fff;"></div>
<div class="t" style="left:441.3px;top:21.9px;font-size:12px;color:#9aa7ad;letter-spacing:-0.12px;">Найти и заменить</div>
<div class="t" style="left:840.3px;top:22.1px;font-size:13px;color:#b5b5b5;">?</div>
<svg style="left:883px;top:22px" width="11" height="11"><path d="M0.5 0.5L10.5 10.5M10.5 0.5L0.5 10.5" stroke="#a0a0a0" stroke-width="1.1"/></svg>
<svg style="left:0;top:0" width="1024" height="727"><path d="M825 25.25H866L862 17.0L879 27.5L862 38.0L866 29.75H825Z" fill="#fb0a0a"/></svg>
<div class="r" style="left:441px;top:52px;width:51px;height:20px;background:#f0f0f0;border:1px solid #d9d9d9;border-bottom:none;border-left-color:#e6e6e6"></div>
<div class="r" style="left:440px;top:71px;width:462px;height:143px;background:#fff;border:1px solid #d9d9d9"></div>
<div class="r" style="left:491px;top:50px;width:73px;height:22px;background:#fff;border:1px solid #d9d9d9;border-bottom:none"></div>
<div class="t" style="left:449.3px;top:57.0px;font-size:11.5px;color:#000;letter-spacing:0.16px;">На<u>й</u>ти</div>
<div class="t" style="left:501.3px;top:56.5px;font-size:11.5px;color:#000;letter-spacing:0.04px;">Заменит<u>ь</u></div>
<div class="t" style="left:448.1px;top:86.0px;font-size:11.5px;color:#000;letter-spacing:-0.11px;">Найт<u>и</u>:</div>
<div class="t" style="left:448.1px;top:109.0px;font-size:11.5px;color:#000;letter-spacing:-0.10px;">З<u>а</u>менить на:</div>
<div class="t" style="left:448.1px;top:140.0px;font-size:11.5px;color:#000;letter-spacing:-0.23px;">И<u>с</u>кать:</div>
<div class="t" style="left:448.1px;top:165.0px;font-size:11.5px;color:#000;letter-spacing:-0.00px;">Прос<u>м</u>атривать:</div>
<div class="t" style="left:448.1px;top:190.0px;font-size:11.5px;color:#000;letter-spacing:-0.05px;">О<u>б</u>ласть поиска:</div>
<div class="r" style="left:527px;top:81px;width:149px;height:20px;background:#fff;border:1px solid #a0a0a0"></div><div class="r" style="left:658px;top:81px;width:18px;height:20px;background:#e4e4e4;border:1px solid #adadad"></div><svg style="left:662px;top:88.5px" width="9" height="6"><path d="M0.6 0.8L4.5 4.7L8.4 0.8" fill="none" stroke="#555" stroke-width="1.1"/></svg>
<div class="r" style="left:527px;top:104px;width:149px;height:20px;background:#fff;border:1px solid #a0a0a0"></div><div class="r" style="left:658px;top:104px;width:18px;height:20px;background:#e4e4e4;border:1px solid #adadad"></div><svg style="left:662px;top:111.5px" width="9" height="6"><path d="M0.6 0.8L4.5 4.7L8.4 0.8" fill="none" stroke="#555" stroke-width="1.1"/></svg>
<div class="t" style="left:531.3px;top:86.2px;font-size:12px;color:#000;">.</div>
<div class="t" style="left:531.3px;top:109.2px;font-size:12px;color:#000;">,</div>
<div class="r" style="left:545px;top:134px;width:100px;height:22px;background:#fff;border:1px solid #a0a0a0"></div><div class="r" style="left:628px;top:134px;width:17px;height:22px;background:#e4e4e4;border:1px solid #adadad"></div><svg style="left:632px;top:142.5px" width="9" height="6"><path d="M0.6 0.8L4.5 4.7L8.4 0.8" fill="none" stroke="#555" stroke-width="1.1"/></svg>
<div class="r" style="left:545px;top:159px;width:100px;height:22px;background:#fff;border:1px solid #a0a0a0"></div><div class="r" style="left:628px;top:159px;width:17px;height:22px;background:#e4e4e4;border:1px solid #adadad"></div><svg style="left:632px;top:167.5px" width="9" height="6"><path d="M0.6 0.8L4.5 4.7L8.4 0.8" fill="none" stroke="#555" stroke-width="1.1"/></svg>
<div class="r" style="left:545px;top:184px;width:100px;height:22px;background:#fff;border:1px solid #a0a0a0"></div><div class="r" style="left:628px;top:184px;width:17px;height:22px;background:#e4e4e4;border:1px solid #adadad"></div><svg style="left:632px;top:192.5px" width="9" height="6"><path d="M0.6 0.8L4.5 4.7L8.4 0.8" fill="none" stroke="#555" stroke-width="1.1"/></svg>
<div class="t" style="left:549.6px;top:140.0px;font-size:11.5px;color:#000;letter-spacing:-0.16px;">на листе</div>
<div class="t" style="left:549.6px;top:165.0px;font-size:11.5px;color:#000;letter-spacing:0.20px;">по строкам</div>
<div class="t" style="left:549.6px;top:190.0px;font-size:11.5px;color:#000;letter-spacing:-0.09px;">формулы</div>
<div class="r" style="left:654px;top:135px;width:13px;height:13px;background:#fff;border:1px solid #333"></div>
<div class="r" style="left:654px;top:154px;width:13px;height:13px;background:#fff;border:1px solid #333"></div>
<div class="t" style="left:670.9px;top:136.5px;font-size:11.5px;color:#000;letter-spacing:0.06px;"><u>У</u>читывать регистр</div>
<div class="t" style="left:670.9px;top:155.7px;font-size:11.5px;color:#000;letter-spacing:0.19px;">Ячейка <u>ц</u>еликом</div>
<div class="r" style="left:685px;top:81px;width:111px;height:20px;background:#fff;border:1px solid #000"></div>
<div class="t" style="left:694.8px;top:86.3px;font-size:11.5px;color:#000;letter-spacing:-0.04px;">Формат не задан</div>
<div class="r" style="left:685px;top:104px;width:111px;height:20px;background:#fff;border:1px solid #000"></div>
<div class="t" style="left:708.3px;top:107.8px;font-size:13.5px;color:#000;letter-spacing:0.44px;">Образец*</div>
<div class="r" style="left:806px;top:82px;width:89px;height:18px;background:#e1e1e1;border:1px solid #adadad"></div>
<div class="t" style="left:825.3px;top:86.0px;font-size:11.5px;color:#000;letter-spacing:0.23px;">Форма<u>т</u>...</div>
<svg style="left:886.5px;top:89.5px" width="5.4" height="3.2"><path d="M0 0H5.4L2.7 3.2Z" fill="#000"/></svg>
<div class="r" style="left:806px;top:105px;width:89px;height:18px;background:#e1e1e1;border:1px solid #adadad"></div>
<div class="t" style="left:825.3px;top:109.0px;font-size:11.5px;color:#000;letter-spacing:0.23px;">Форма<u>т</u>...</div>
<svg style="left:886.5px;top:112.5px" width="5.4" height="3.2"><path d="M0 0H5.4L2.7 3.2Z" fill="#000"/></svg>
<div class="r" style="left:798px;top:183px;width:97px;height:22px;background:#e1e1e1;border:1px solid #adadad"></div><div class="t" style="left:805.3px;top:189.0px;font-size:11.5px;color:#000;letter-spacing:-0.06px;"><u>П</u>араметры &lt;&thinsp;&lt;</div>
<div class="r" style="left:453px;top:224px;width:88px;height:22px;background:#e1e1e1;border:2px solid #0078d7"></div><div class="t" style="left:460.6px;top:230.0px;font-size:11.5px;color:#000;letter-spacing:-0.14px;">Заменить <u>в</u>се</div>
<div class="r" style="left:551px;top:224px;width:74px;height:22px;background:#e1e1e1;border:1px solid #adadad"></div><div class="t" style="left:561.0px;top:230.0px;font-size:11.5px;color:#000;letter-spacing:0.12px;"><u>З</u>аменить</div>
<div class="r" style="left:644px;top:224px;width:74px;height:22px;background:#e1e1e1;border:1px solid #adadad"></div><div class="t" style="left:653.9px;top:230.0px;font-size:11.5px;color:#000;letter-spacing:-0.08px;"><u>Н</u>айти все</div>
<div class="r" style="left:728px;top:224px;width:83px;height:22px;background:#e1e1e1;border:1px solid #adadad"></div><div class="t" style="left:735.3px;top:230.0px;font-size:11.5px;color:#000;letter-spacing:-0.18px;">Найти да<u>л</u>ее</div>
<div class="r" style="left:830px;top:224px;width:74px;height:22px;background:#e1e1e1;border:1px solid #adadad"></div><div class="t" style="left:844.6px;top:230.0px;font-size:11.5px;color:#000;letter-spacing:0.12px;">Закрыть</div>
<div class="r" style="left:226px;top:333px;width:245px;height:115px;background:#f0f0f0;border:1px solid #38a4d8;box-shadow:0 1px 8px rgba(0,0,0,0.35)"></div>
<div class="r" style="left:227px;top:334px;width:243px;height:30px;background:#fff;"></div>
<div class="t" style="left:234.7px;top:343.4px;font-size:12.5px;color:#000;letter-spacing:-0.32px;">Microsoft Excel</div>
<svg style="left:450px;top:343px" width="11" height="11"><path d="M0.5 0.5L10.5 10.5M10.5 0.5L0.5 10.5" stroke="#111" stroke-width="1.1"/></svg>
<svg style="left:245px;top:378px" width="30" height="30"><circle cx="15" cy="15" r="15" fill="#0b6cbd"/><rect x="14" y="12.5" width="2.2" height="11" fill="#fff"/><rect x="14" y="7.5" width="2.2" height="2.4" fill="#fff"/></svg>
<div class="t" style="left:291.3px;top:389.0px;font-size:11.5px;color:#000;letter-spacing:-0.06px;">Все готово. Сделано замен: 60.</div>
<div class="r" style="left:302px;top:419px;width:93px;height:21px;background:#e1e1e1;border:2px solid #0078d7"></div><div class="t" style="left:340.6px;top:424.5px;font-size:11.5px;color:#000;letter-spacing:-0.62px;">OK</div>
<svg style="left:0;top:0" width="1024" height="727"><path d="M253 428.0H297.5L293.5 419.8L311 429.8L293.5 439.8L297.5 431.6H253Z" fill="#fb0a0a"/></svg>
<div class="r" style="left:219px;top:328px;width:258px;height:123px;background:transparent;border:3px solid #fb0a0a;border-radius:9px"></div>
</body></html>
